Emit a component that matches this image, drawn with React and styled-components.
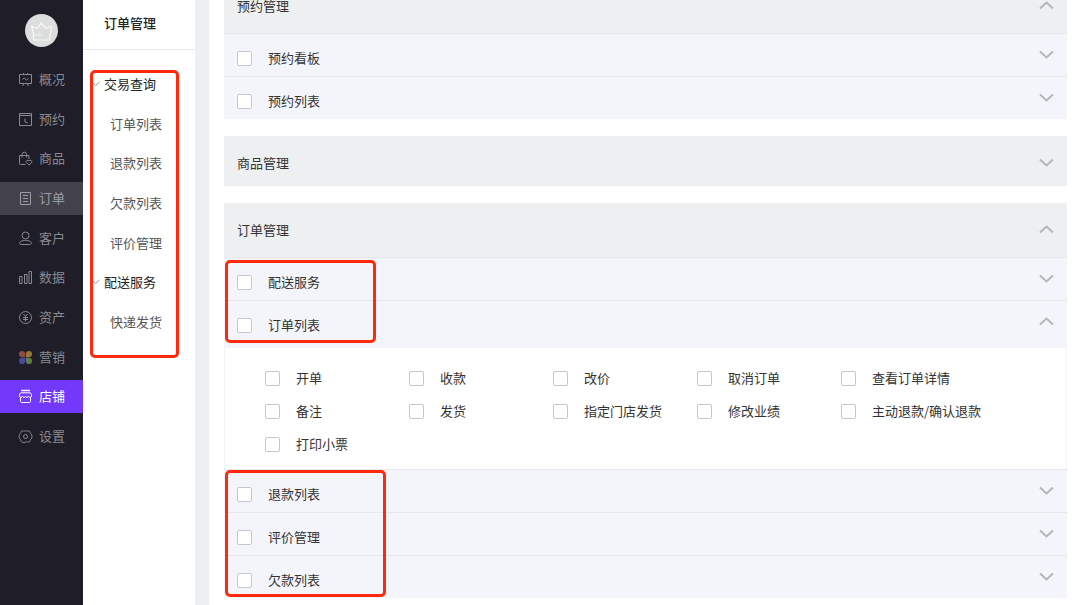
import React, { useState } from "react";
import styled, { createGlobalStyle } from "styled-components";

const GlobalStyle = createGlobalStyle`
  * {
    box-sizing: border-box;
  }

  body {
    margin: 0;
    background-color: #fff;
    color: #333;
    font-family: "Noto Sans CJK SC", sans-serif;
    font-size: 13px;
    line-height: 17px;
  }

  a {
    color: inherit;
    text-decoration: none;
  }
`;

const Page = styled.div`
  display: flex;
  height: 100vh;
  overflow: hidden;
`;

const Nav = styled.nav`
  flex: 0 0 83px;
  background-color: #1e1d28;
`;

const Logo = styled.svg`
  display: block;
  width: 33px;
  height: 33px;
  margin: 14px auto 16px;
`;

const NavList = styled.div`
  display: flex;
  flex-direction: column;
  justify-content: space-between;
  height: 390px;
`;

const NavLink = styled.a`
  display: flex;
  align-items: center;
  gap: 6px;
  height: 33px;
  padding-left: 18px;
  background-color: ${(props) => props.$bg || "transparent"};
  && {
    color: ${(props) => props.$color || "#8a8a91"};
  }
`;

const NavIcon = styled.svg`
  width: 15px;
  height: 15px;
  fill: none;
  stroke: currentColor;
  stroke-width: 1;
`;

const Text = styled.span`
  padding-bottom: 2px;
`;

const SubMenu = styled.aside`
  position: relative;
  flex: 0 0 112px;
  background-color: #fff;
`;

const SubTitle = styled.h1`
  margin: 0;
  padding: 14px 0 18px 21px;
  border-bottom: 1px solid #e8e9ec;
  color: #222;
  font-size: 13px;
  font-weight: 500;
`;

const SubList = styled.div`
  display: flex;
  flex-direction: column;
  justify-content: space-between;
  height: 255px;
  margin-top: 25px;
`;

const SubGroup = styled.a`
  display: flex;
  align-items: center;
  gap: 3px;
  padding-left: 9px;
  && {
    color: #222;
  }
`;

const SubLink = styled.a`
  padding-left: 27px;
  && {
    color: #555;
  }
`;

const Tick = styled.svg`
  width: 9px;
  height: 6px;
  fill: none;
  stroke: #999;
`;

const Gutter = styled.div`
  flex: 0 0 14px;
  background-color: #edeff2;
`;

const Main = styled.main`
  flex: 1;
  min-width: 0;
  overflow: hidden;
  padding: 0 13px 0 15px;
`;

/* the list is scrolled a little under the top edge */
const Sections = styled.div`
  display: flex;
  flex-direction: column;
  gap: 17px;
  margin-top: -21px;
`;

const Section = styled.section`
  position: relative;
`;

const SectionHead = styled.header`
  display: flex;
  align-items: flex-start;
  justify-content: space-between;
  height: ${(props) => (props.$open ? "54px" : "50px")};
  padding: 18px 13px 0 13px;
  background-color: #edeff1;
`;

const SectionTitle = styled.h2`
  margin: 0;
  font-size: 13px;
  font-weight: 400;
`;

const Row = styled.div`
  display: flex;
  align-items: flex-start;
  justify-content: space-between;
  height: ${(props) => (props.$open ? "48px" : "43px")};
  padding: 15px 13px 0 13px;
  border-top: 1px solid #e6e8ec;
  background-color: #f4f5fa;
`;

const Label = styled.label`
  display: flex;
  align-items: center;
  gap: 16px;
  white-space: nowrap;
`;

const Checkbox = styled.input.attrs({ type: "checkbox" })`
  appearance: none;
  flex: none;
  width: 15px;
  height: 15px;
  margin: 0;
  border: 1px solid #c6c7ca;
  border-radius: 2px;
  background-color: #fff;

  &:checked {
    background-color: #7239fa;
    border-color: #7239fa;
  }
`;

const Toggle = styled.button`
  display: block;
  padding: 0;
  margin-top: ${(props) => (props.$inRow ? "1px" : "4px")};
  border: 0;
  background: none;
  color: #b4b5b8;
  cursor: pointer;
`;

const Arrow = styled.svg`
  display: block;
  width: 15px;
  height: 9px;
  fill: none;
  stroke: currentColor;
  stroke-width: 2;
`;

const Details = styled.div`
  display: grid;
  grid-template-columns: repeat(5, 144px);
  row-gap: 14px;
  padding: 21px 0 15px 40px;
  border: solid #f5f5f7;
  border-width: 0 1px;
`;

const Mark = styled.div`
  position: absolute;
  top: ${(props) => props.$top}px;
  left: ${(props) => props.$left}px;
  width: ${(props) => props.$width}px;
  height: ${(props) => props.$height}px;
  border: 3px solid #ff2a0c;
  border-radius: 5px;
  pointer-events: none;
`;

const icons = {
  overview: (
    <>
      <path d="M1.500 2.500h12v9h-12zM5 1.500h1M9 1.500h1M4.500 14l1.500-2.500M10.500 14L9 11.500" />
      <path d="M4.500 7.500l1.700-1.500 2.300 2L10.500 6.500" />
    </>
  ),
  booking: (
    <>
      <path d="M1.500 1.500h12v12h-12zM1.500 3.500h12" />
      <path d="M7 6.500v3.500l2.500 1" />
    </>
  ),
  goods: (
    <>
      <path d="M7.500 13.500H2.500c-.6 0-1-.4-1-1V4.500h9.500v3.500M4 6.500V3.500a2.300 2.300 0 0 1 4.600 0v3" />
      <path d="M11 14L8.500 11.700a1.500 1.500 0 0 1 2.500-1.900 1.500 1.500 0 0 1 2.500 1.900z" />
    </>
  ),
  order: <path d="M2.500 1.500h10v12h-10zM5 4.500h5M5 7.500h5M5 10.500h5" />,
  customer: (
    <>
      <circle cx="7.5" cy="4.500" r="3.500" />
      <path d="M7.500 9.500c3.500 0 6 1 6 2.800 0 .8-.7 1.200-2 1.200h-8c-1.300 0-2-.4-2-1.200 0-1.800 2.500-2.800 6-2.800z" />
    </>
  ),
  data: <path d="M1.500 6.500h2.500v7h-2.500zM6.500 4.500h2.500v9h-2.500zM11 1.500h2.500v12h-2.500z" />,
  assets: (
    <>
      <circle cx="7.5" cy="7.5" r="6" />
      <path d="M5.500 4l2 2.500 2-2.500M7.500 6.500v5M5 7.500h5M5 9.500h5" />
    </>
  ),
  marketing: (
    <g stroke="none">
      <path d="M4.100 1A3.100 3.100 0 0 1 7.200 4.100V7.200H4.100A3.100 3.100 0 0 1 4.100 1z" fill="#924a46" />
      <path d="M10.900 1A3.100 3.100 0 0 1 10.900 7.200H7.800V4.100A3.100 3.100 0 0 1 10.900 1z" fill="#94793a" />
      <path d="M4.100 7.800H7.200V10.900A3.100 3.100 0 1 1 4.100 7.800z" fill="#48499a" />
      <path d="M7.800 7.800H10.900A3.100 3.100 0 1 1 7.800 10.900z" fill="#5d7e49" />
    </g>
  ),
  shop: (
    <>
      <path d="M3 1.500h9" strokeWidth="1.500" />
      <path d="M3 3.800h9c.8 0 1.500 1 1.500 3.200 0 1.700-2.300 1.900-3 .3-.6 1.500-2.300 1.500-3 0-.7 1.500-2.400 1.500-3 0-.7 1.600-3 1.400-3-.3 0-2.200.7-3.200 1.500-3.200z" />
      <path d="M2.500 8.300v4.200c0 .6.400 1 1 1h8c.6 0 1-.4 1-1V8.300" />
    </>
  ),
  settings: (
    <>
      <path d="M4.500 1.700c1 .6 1.800.6 3 .1 1.200.5 2 .5 3-.1l1.500.9c.1 1.300.4 2 1.500 2.700l.5 2.200-.5 2.200c-1.100.7-1.400 1.400-1.500 2.700l-1.500.9c-1-.6-1.800-.6-3-.1-1.200.5-2 .5-3 .1l-1.500-.9C2.900 11.100 2.600 10.400 1.500 9.700L1 7.500l.5-2.200c1.100-.7 1.400-1.400 1.500-2.700z" />
      <circle cx="7.5" cy="7.5" r="2" />
    </>
  ),
};

const navItems = [
  { icon: "overview", text: "概况" },
  { icon: "booking", text: "预约" },
  { icon: "goods", text: "商品" },
  { icon: "order", text: "订单", bg: "#42414c", color: "#9d9da3" },
  { icon: "customer", text: "客户" },
  { icon: "data", text: "数据" },
  { icon: "assets", text: "资产" },
  { icon: "marketing", text: "营销" },
  { icon: "shop", text: "店铺", bg: "#7239fa", color: "#fff" },
  { icon: "settings", text: "设置" },
];

const subItems = [
  { text: "交易查询", group: true },
  { text: "订单列表" },
  { text: "退款列表" },
  { text: "欠款列表" },
  { text: "评价管理" },
  { text: "配送服务", group: true },
  { text: "快递发货" },
];

const orderActions = [
  "开单",
  "收款",
  "改价",
  "取消订单",
  "查看订单详情",
  "备注",
  "发货",
  "指定门店发货",
  "修改业绩",
  "主动退款/确认退款",
  "打印小票",
];

const sections = [
  {
    title: "预约管理",
    open: true,
    rows: [{ text: "预约看板" }, { text: "预约列表" }],
  },
  { title: "商品管理", open: false, rows: [] },
  {
    title: "订单管理",
    open: true,
    rows: [
      { text: "配送服务" },
      { text: "订单列表", actions: orderActions },
      { text: "退款列表" },
      { text: "评价管理" },
      { text: "欠款列表" },
    ],
    marks: [
      { top: 57, left: 1, width: 151, height: 83 },
      { top: 267, left: 1, width: 161, height: 127 },
    ],
  },
];

const ToggleButton = ({ open, inRow, onClick, name }) => (
  <Toggle type="button" $inRow={inRow} aria-label={name} aria-expanded={open} onClick={onClick}>
    <Arrow viewBox="0 0 15 9">
      <path d={open ? "M1 7.500L7.500 1.500L14 7.500" : "M1 1.500L7.500 7.500L14 1.500"} />
    </Arrow>
  </Toggle>
);

const PermissionRow = ({ row }) => {
  const [open, setOpen] = useState(Boolean(row.actions));

  return (
    <>
      <Row $open={open}>
        <Label>
          <Checkbox />
          <Text>{row.text}</Text>
        </Label>
        <ToggleButton inRow open={open} name={row.text} onClick={() => setOpen(!open)} />
      </Row>
      {open && row.actions && (
        <Details>
          {row.actions.map((action) => (
            <Label key={action}>
              <Checkbox />
              <Text>{action}</Text>
            </Label>
          ))}
        </Details>
      )}
    </>
  );
};

const PermissionSection = ({ section }) => {
  const [open, setOpen] = useState(section.open);

  return (
    <Section>
      <SectionHead $open={open}>
        <SectionTitle>{section.title}</SectionTitle>
        <ToggleButton open={open} name={section.title} onClick={() => setOpen(!open)} />
      </SectionHead>
      {open && section.rows.map((row) => <PermissionRow key={row.text} row={row} />)}
      {open &&
        section.marks?.map((mark, i) => (
          <Mark
            key={i}
            $top={mark.top}
            $left={mark.left}
            $width={mark.width}
            $height={mark.height}
          />
        ))}
    </Section>
  );
};

const App = () => {
  return (
    <Page lang="zh-CN">
      <GlobalStyle />
      <Nav>
        <Logo viewBox="0 0 33 33">
          <circle cx="16.5" cy="16.5" r="16.5" fill="#dcdedd" />
          <path
            d="M8.500 20.500L6.500 12L12 14.500L16.500 9L21 14.500L26.500 12L24.500 26H8.500v-5h9"
            fill="none"
            stroke="#f6f7f6"
            strokeWidth="1.2"
            strokeLinejoin="round"
          />
        </Logo>
        <NavList>
          {navItems.map((item) => (
            <NavLink key={item.text} href="#" $bg={item.bg} $color={item.color}>
              <NavIcon viewBox="0 0 15 15">{icons[item.icon]}</NavIcon>
              <Text>{item.text}</Text>
            </NavLink>
          ))}
        </NavList>
      </Nav>
      <SubMenu>
        <SubTitle>订单管理</SubTitle>
        <SubList>
          {subItems.map((item) =>
            item.group ? (
              <SubGroup key={item.text} href="#">
                <Tick viewBox="0 0 9 6">
                  <path d="M1 2l2.500 2.500L7.500 1" />
                </Tick>
                {item.text}
              </SubGroup>
            ) : (
              <SubLink key={item.text} href="#">
                {item.text}
              </SubLink>
            )
          )}
        </SubList>
        <Mark $top={70} $left={7} $width={89} $height={288} />
      </SubMenu>
      <Gutter />
      <Main>
        <Sections>
          {sections.map((section) => (
            <PermissionSection key={section.title} section={section} />
          ))}
        </Sections>
      </Main>
    </Page>
  );
};

export default App;
